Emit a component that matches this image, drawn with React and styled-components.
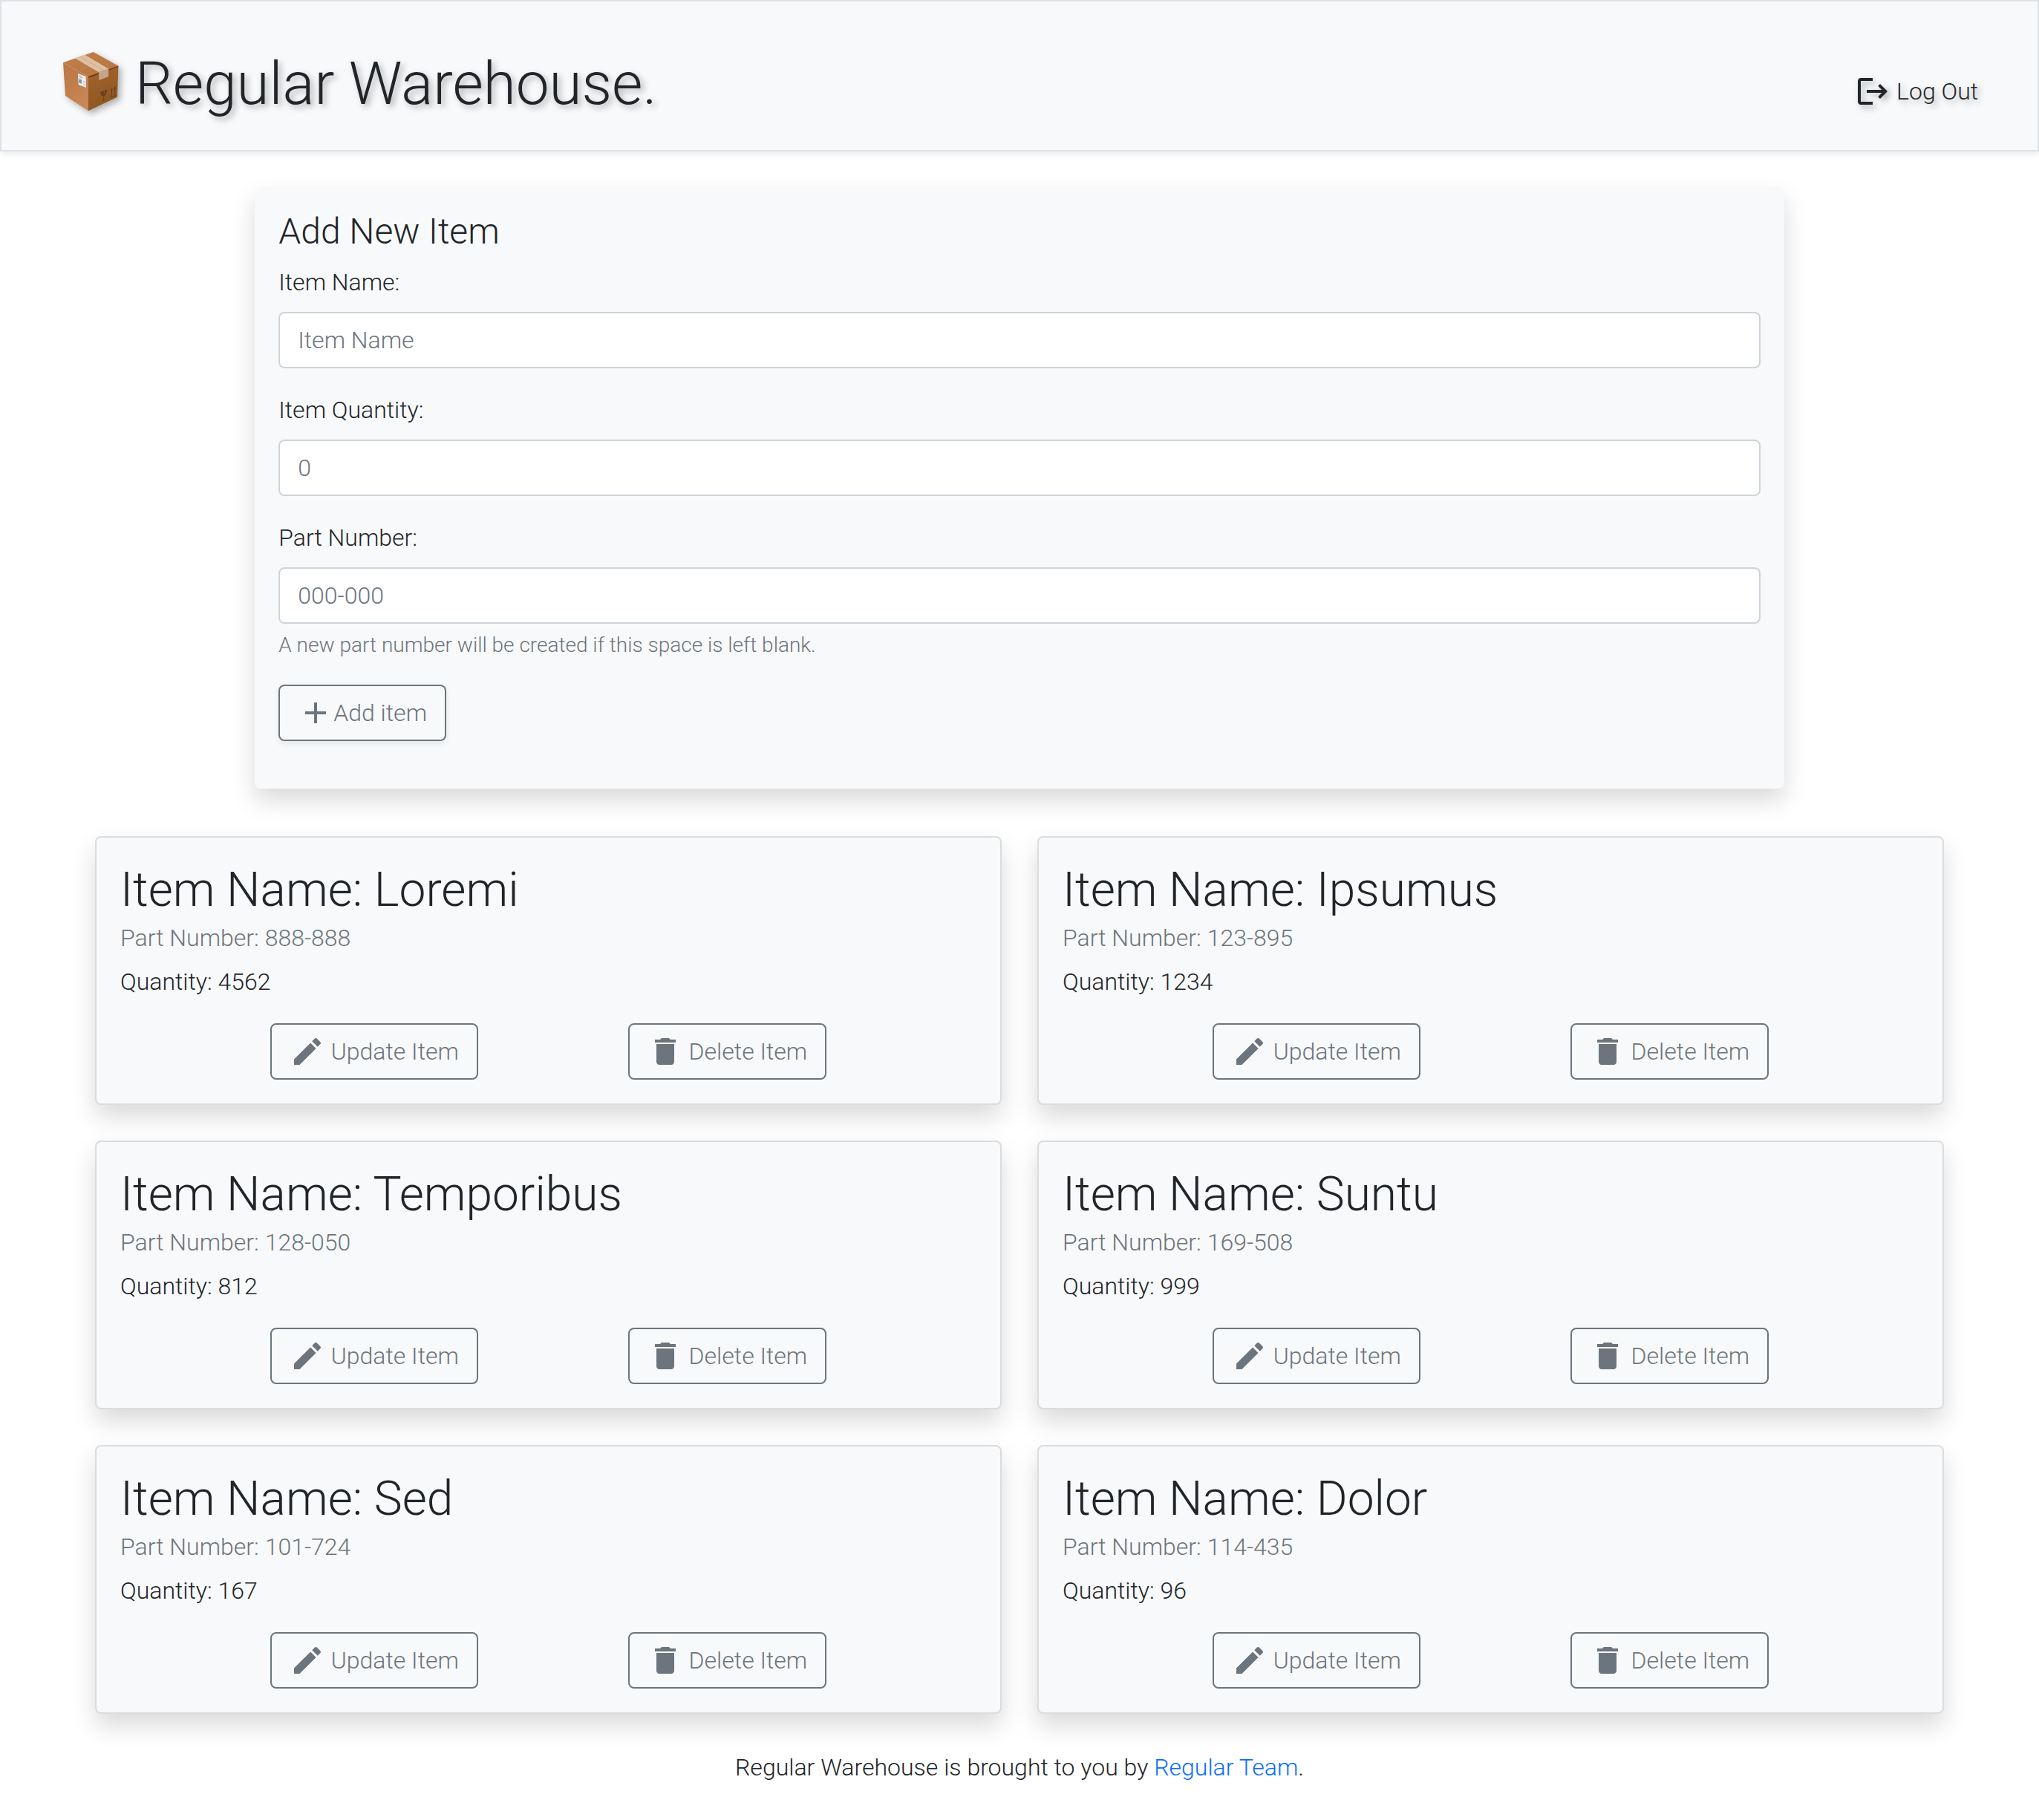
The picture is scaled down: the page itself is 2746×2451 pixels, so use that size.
import React, { useId } from "react";
import styled, { createGlobalStyle, css } from "styled-components";

const GlobalStyle = createGlobalStyle`
  *, *::before, *::after { box-sizing: border-box; }
  body {
    margin: 0;
    background: #fff;
    color: #212529;
    font-family: Roboto, "Liberation Sans", sans-serif;
    font-size: 32px;
    font-weight: 300;
    line-height: 48px;
  }
  h1, h2, h3, h4, p { margin: 0; font-weight: 300; }
`;

const Header = styled.header`
  display: flex;
  flex-wrap: wrap;
  justify-content: space-between;
  align-items: flex-end;
  padding: 63px 80px 41px;
  background: #f8f9fa;
  border: 2px solid #dee2e6;
  box-shadow: 0 4px 8px rgba(0, 0, 0, 0.075);
`;

const Brand = styled.h1`
  display: flex;
  align-items: center;
  gap: 20px;
  font-size: 80px;
  line-height: 96px;
  text-shadow: 4px 4px 8px rgba(0, 0, 0, 0.3);
`;

const BoxArt = styled.svg`
  width: 80px;
  height: 90px;
  filter: drop-shadow(4px 4px 4px rgba(0, 0, 0, 0.3));
`;

const IconSvg = styled.svg`
  flex: none;
  width: 48px;
  height: 48px;
  fill: currentColor;
`;

const LogOutButton = styled.button`
  display: flex;
  align-items: center;
  gap: 8px;
  padding: 0 0 14px;
  border: 0;
  background: none;
  color: inherit;
  font: inherit;
  text-shadow: 4px 4px 8px rgba(0, 0, 0, 0.3);
  cursor: pointer;

  svg {
    filter: drop-shadow(4px 4px 4px rgba(0, 0, 0, 0.3));
  }
`;

const panel = css`
  background: #f8f9fa;
  border-radius: 8px;
  box-shadow: 0 16px 32px rgba(0, 0, 0, 0.15);
`;

const ItemForm = styled.form`
  ${panel}
  width: 75%;
  margin: 48px auto 64px;
  padding: 32px 32px 64px;
`;

const FormTitle = styled.h2`
  margin-bottom: 16px;
  font-size: 48px;
  line-height: 56px;
`;

const FieldGroup = styled.div`
  margin-bottom: 32px;
`;

const FieldLabel = styled.label`
  display: block;
  margin-bottom: 16px;
`;

const TextInput = styled.input`
  display: block;
  width: 100%;
  height: 76px;
  padding: 12px 24px;
  border: 2px solid #ced4da;
  border-radius: 8px;
  background: #fff;
  color: #495057;
  font: inherit;

  &::placeholder {
    color: #6c757d;
    opacity: 1;
  }
`;

const HelpText = styled.p`
  margin-top: 8px;
  color: #6c757d;
  font-size: 28px;
  line-height: 42px;
`;

const OutlineButton = styled.button`
  display: inline-flex;
  align-items: center;
  gap: ${(p) => (p.$tight ? "0" : "8px")};
  height: 76px;
  padding: 0 24px;
  border: 2px solid #6c757d;
  border-radius: 8px;
  background: transparent;
  color: #6c757d;
  font: inherit;
  cursor: pointer;
  box-shadow: ${(p) => (p.$raised ? "0 4px 8px rgba(0, 0, 0, 0.075)" : "none")};
`;

const ItemGrid = styled.main`
  display: grid;
  grid-template-columns: repeat(2, minmax(0, 1fr));
  gap: 48px;
  padding: 0 128px;

  @media (max-width: 1500px) {
    grid-template-columns: minmax(0, 1fr);
    padding: 0 48px;
  }
`;

const Card = styled.article`
  ${panel}
  padding: 32px;
  border: 2px solid #dadcde;
`;

const CardTitle = styled.h2`
  margin-bottom: 6px;
  font-size: 64px;
  line-height: 78px;
`;

const PartNumber = styled.p`
  margin-bottom: 16px;
  color: #6c757d;
  line-height: 38px;
`;

const Quantity = styled.p`
  margin-bottom: 32px;
`;

const CardActions = styled.div`
  display: flex;
  flex-wrap: wrap;
  justify-content: space-evenly;
`;

const Footer = styled.footer`
  padding: 48px 32px;
  text-align: center;
`;

const FooterLink = styled.a`
  color: #0d6efd;
  text-decoration: none;
`;

const ICONS = {
  logout:
    "M17 7l-1.41 1.41L18.17 11H8v2h10.17l-2.58 2.58L17 17l5-5zM4 5h8V3H4c-1.1 0-2 .9-2 2v14c0 1.1.9 2 2 2h8v-2H4V5z",
  add: "M19 13h-6v6h-2v-6H5v-2h6V5h2v6h6v2z",
  edit:
    "M3 17.25V21h3.75L17.81 9.94l-3.75-3.75L3 17.25zM20.71 7.04c.39-.39.39-1.02 0-1.41l-2.34-2.34c-.39-.39-1.02-.39-1.41 0l-1.83 1.83 3.75 3.75 1.83-1.83z",
  trash:
    "M6 19c0 1.1.9 2 2 2h8c1.1 0 2-.9 2-2V7H6v12zM19 4h-3.5l-1-1h-5l-1 1H5v2h14V4z",
};

function Icon({ name }) {
  return (
    <IconSvg viewBox="0 0 24 24" aria-hidden="true">
      <path d={ICONS[name]} />
    </IconSvg>
  );
}

function PackageBox() {
  return (
    <BoxArt viewBox="66 84 240 270" aria-hidden="true">
      <defs>
        <linearGradient id="boxTop" x1="0" y1="0" x2="1" y2="0.4">
          <stop offset="0" stopColor="#c07e49" />
          <stop offset="1" stopColor="#b87743" />
        </linearGradient>
        <linearGradient id="boxLeft" x1="0" y1="0" x2="0.5" y2="1">
          <stop offset="0" stopColor="#b97543" />
          <stop offset="1" stopColor="#c98656" />
        </linearGradient>
        <linearGradient id="boxRight" x1="0" y1="0" x2="0.3" y2="1">
          <stop offset="0" stopColor="#a4652e" />
          <stop offset="1" stopColor="#8f5620" />
        </linearGradient>
      </defs>
      <path d="M75 133L197 90L298 146L177 190Z" fill="url(#boxTop)" />
      <path d="M75 133L177 189V328L84 267Z" fill="url(#boxLeft)" />
      <path d="M177 189L298 146L294 272L177 328Z" fill="url(#boxRight)" />
      <path d="M177 189L298 146V151L177 195Z" fill="#6d3d17" />
      <path d="M75 133L177 189V192L75 136Z" fill="#cb8e5f" />
      <path d="M122 115L163 101L259 158L219 172Z" fill="#dfc0a2" />
      <path d="M142 108L240 165" stroke="#c4a180" strokeWidth="2" fill="none" />
      <path d="M219 172L259 157L258 190L220 204Z" fill="#c3a48c" />
      <path d="M135 177L167 189L168 234L137 222Z" fill="#eef0ee" />
      <path d="M139 184L150 188M139 190L154 195M140 197L150 201" stroke="#83868a" strokeWidth="2" />
      <path d="M138 200L150 204V218L138 214Z" fill="#92959a" />
      <path d="M154 206L165 210M154 211L165 215M154 217L165 221M154 223L165 227" stroke="#b9bcbe" strokeWidth="2" />
      <path
        d="M226 251L252 242C252 255 248 264 240 268L240 283L246 282V285L233 289V286L238 284V269C230 268 226 261 226 251Z"
        fill="#64401f"
      />
      <path d="M239 247L243 255L238 259" stroke="#a2662d" strokeWidth="2" fill="none" />
      <path d="M271 272V243M284 267V238M265 274L289 266" stroke="#64401f" strokeWidth="3" fill="none" />
      <path d="M266 247L271 235L276 243ZM279 242L284 230L289 238Z" fill="#64401f" />
    </BoxArt>
  );
}

function Field({ label, help, ...inputProps }) {
  const id = useId();
  return (
    <FieldGroup>
      <FieldLabel htmlFor={id}>{label}</FieldLabel>
      <TextInput id={id} {...inputProps} />
      {help && <HelpText>{help}</HelpText>}
    </FieldGroup>
  );
}

function ItemCard({ name, part, quantity }) {
  return (
    <Card>
      <CardTitle>Item Name: {name}</CardTitle>
      <PartNumber>Part Number: {part}</PartNumber>
      <Quantity>Quantity: {quantity}</Quantity>
      <CardActions>
        <OutlineButton type="button">
          <Icon name="edit" />
          Update Item
        </OutlineButton>
        <OutlineButton type="button">
          <Icon name="trash" />
          Delete Item
        </OutlineButton>
      </CardActions>
    </Card>
  );
}

const ITEMS = [
  { name: "Loremi", part: "888-888", quantity: 4562 },
  { name: "Ipsumus", part: "123-895", quantity: 1234 },
  { name: "Temporibus", part: "128-050", quantity: 812 },
  { name: "Suntu", part: "169-508", quantity: 999 },
  { name: "Sed", part: "101-724", quantity: 167 },
  { name: "Dolor", part: "114-435", quantity: 96 },
];

export default function App() {
  return (
    <>
      <GlobalStyle />
      <Header>
        <Brand>
          <PackageBox />
          Regular Warehouse.
        </Brand>
        <LogOutButton type="button">
          <Icon name="logout" />
          Log Out
        </LogOutButton>
      </Header>
      <ItemForm onSubmit={(e) => e.preventDefault()}>
        <FormTitle>Add New Item</FormTitle>
        <Field label="Item Name:" type="text" placeholder="Item Name" />
        <Field label="Item Quantity:" type="text" inputMode="numeric" placeholder="0" />
        <Field
          label="Part Number:"
          type="text"
          placeholder="000-000"
          help="A new part number will be created if this space is left blank."
        />
        <OutlineButton type="submit" $tight $raised>
          <Icon name="add" />
          Add item
        </OutlineButton>
      </ItemForm>
      <ItemGrid>
        {ITEMS.map((item) => (
          <ItemCard key={item.part} {...item} />
        ))}
      </ItemGrid>
      <Footer>
        Regular Warehouse is brought to you by <FooterLink href="#team">Regular Team</FooterLink>.
      </Footer>
    </>
  );
}
